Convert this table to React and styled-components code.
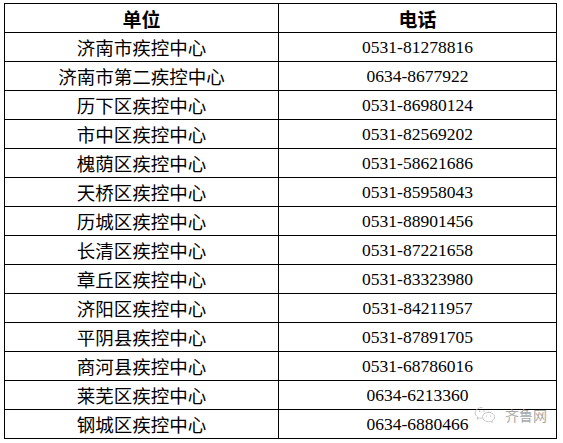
import React from "react";
import styled, { createGlobalStyle } from "styled-components";

const GlobalStyle = createGlobalStyle`
  html, body { margin: 0; padding: 0; background: #fff; }
  body { width: 563px; height: 443px; overflow: hidden; }
`;

const Page = styled.div`
  position: relative;
  width: 563px;
  height: 443px;
  padding: 3px 0 0 4px;
  box-sizing: border-box;
  background: #fff;
`;

const Table = styled.div`
  display: grid;
  grid-template-columns: 274px 278px;
  grid-auto-rows: 29px;
  width: 553px;
  border-top: 1px solid #000;
  border-left: 1px solid #000;
  box-sizing: border-box;
`;

const Cell = styled.div`
  display: flex;
  align-items: center;
  justify-content: center;
  border-right: 1px solid #000;
  border-bottom: 1px solid #000;
  color: #000;
  white-space: nowrap;
  font-family: ${(p) =>
    p.$num
      ? `"Liberation Serif", "Times New Roman", serif`
      : `"Noto Sans CJK SC", "Noto Sans", sans-serif`};
  font-size: ${(p) => (p.$num ? "17.5px" : p.$head ? "19px" : "18.5px")};
  font-weight: ${(p) => (p.$head ? 700 : 400)};
  line-height: 1;
  padding-top: ${(p) => (p.$num ? "1px" : "0")};
`;

const Watermark = styled.div`
  position: absolute;
  left: 474px;
  top: 406px;
  display: flex;
  align-items: center;
  gap: 9px;
  color: #a8a8a8;
  font-family: "Noto Sans CJK SC", sans-serif;
  font-size: 14px;
  line-height: 1;
`;

const rows = [
  ["济南市疾控中心", "0531-81278816"],
  ["济南市第二疾控中心", "0634-8677922"],
  ["历下区疾控中心", "0531-86980124"],
  ["市中区疾控中心", "0531-82569202"],
  ["槐荫区疾控中心", "0531-58621686"],
  ["天桥区疾控中心", "0531-85958043"],
  ["历城区疾控中心", "0531-88901456"],
  ["长清区疾控中心", "0531-87221658"],
  ["章丘区疾控中心", "0531-83323980"],
  ["济阳区疾控中心", "0531-84211957"],
  ["平阴县疾控中心", "0531-87891705"],
  ["商河县疾控中心", "0531-68786016"],
  ["莱芜区疾控中心", "0634-6213360"],
  ["钢城区疾控中心", "0634-6880466"],
];

function ChatIcon() {
  return (
    <svg width="22" height="17" viewBox="0 0 22 17" fill="none">
      <path
        d="M8 1.5C4.2 1.5 1.2 3.9 1.2 6.9c0 1.7 1 3.2 2.5 4.2l-.6 2 2.3-1.2c.8.2 1.6.3 2.5.3"
        stroke="#b5b5b5"
        strokeWidth="0.9"
        strokeDasharray="1.6 1.2"
        strokeLinecap="round"
      />
      <path
        d="M14.6 6.3c-3.3 0-6 2.1-6 4.7s2.7 4.7 6 4.7c.7 0 1.4-.1 2-.3l1.9 1-.5-1.7c1.4-.9 2.6-2.2 2.6-3.7 0-2.6-2.7-4.7-6-4.7z"
        stroke="#b5b5b5"
        strokeWidth="0.9"
        strokeDasharray="1.6 1.2"
        strokeLinecap="round"
      />
      <circle cx="5.6" cy="5.2" r="0.7" fill="#b5b5b5" />
      <circle cx="10" cy="5.2" r="0.7" fill="#b5b5b5" />
      <circle cx="12.5" cy="10" r="0.6" fill="#b5b5b5" />
      <circle cx="16.6" cy="10" r="0.6" fill="#b5b5b5" />
    </svg>
  );
}

export default function App() {
  return (
    <>
      <GlobalStyle />
      <Page>
        <Table>
          <Cell $head>单位</Cell>
          <Cell $head>电话</Cell>
          {rows.map(([name, tel]) => (
            <React.Fragment key={name}>
              <Cell>{name}</Cell>
              <Cell $num>{tel}</Cell>
            </React.Fragment>
          ))}
        </Table>
        <Watermark>
          <ChatIcon />
          <span>齐鲁网</span>
        </Watermark>
      </Page>
    </>
  );
}
